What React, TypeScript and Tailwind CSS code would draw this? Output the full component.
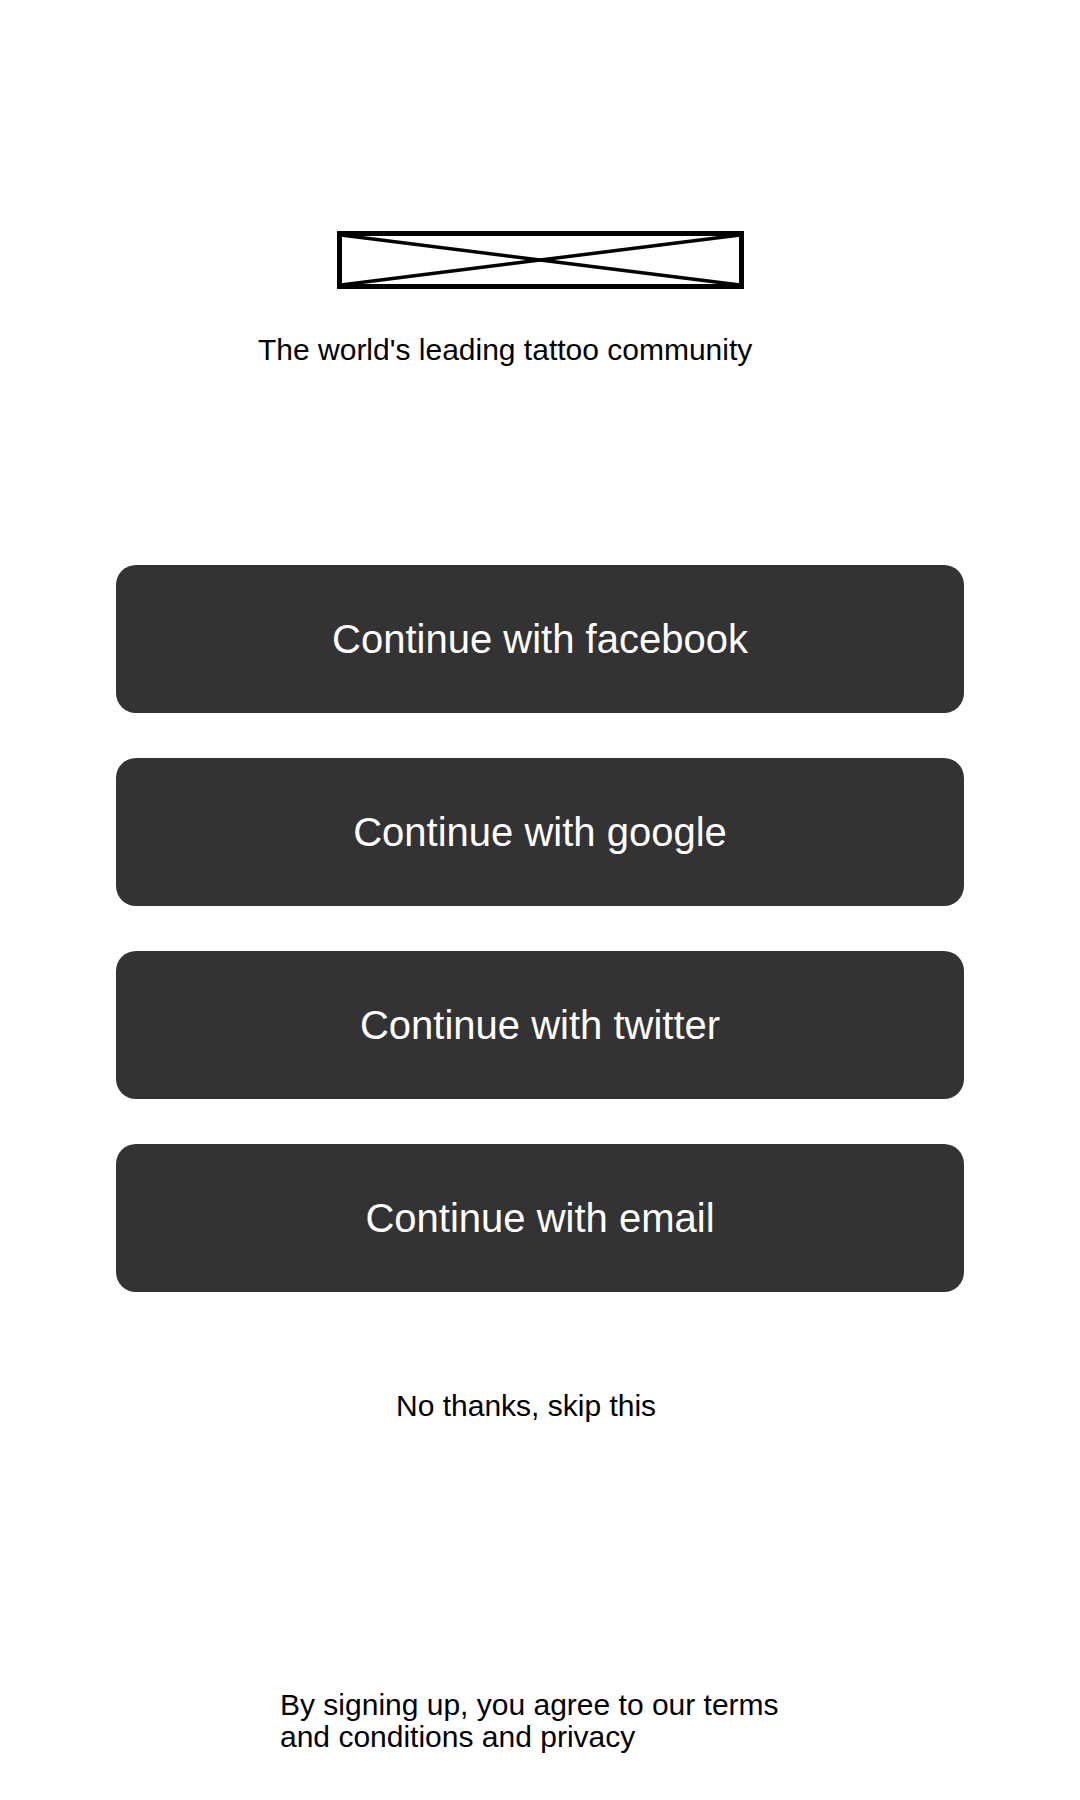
import React from 'react';

const providers = ['facebook', 'google', 'twitter', 'email'];

function LogoPlaceholder() {
    return (
        <svg width="407" height="58" viewBox="0 0 407 58" className="block">
            <line x1="4" y1="4" x2="403" y2="54" stroke="#000" strokeWidth="3.5" />
            <line x1="4" y1="54" x2="403" y2="4" stroke="#000" strokeWidth="3.5" />
            <rect x="2.5" y="2.5" width="402" height="53" fill="none" stroke="#000" strokeWidth="5" />
        </svg>
    );
}

export default function App() {
    return (
        <div
            className="min-h-[1800px] w-full bg-white text-black"
            style={{ fontFamily: '"Liberation Sans", Arial, sans-serif' }}
        >
            <div className="flex flex-col items-center pt-[231px]">
                <LogoPlaceholder />

                <div className="mt-[44px] w-[564px] text-left text-[30px] leading-[34px]">
                    The world's leading tattoo community
                </div>

                <div className="mt-[198px] flex flex-col gap-[45px]">
                    {providers.map((p) => (
                        <button
                            key={p}
                            className="flex h-[148px] w-[848px] items-center justify-center rounded-[20px] bg-[#333333] text-[40px] text-white"
                        >
                            Continue with {p}
                        </button>
                    ))}
                </div>

                <div className="mt-[97px] w-[288px] text-left text-[30px] leading-[34px]">
                    No thanks, skip this
                </div>

                <div className="mt-[266px] w-[520px] text-left text-[30px] leading-[32px]">
                    By signing up, you agree to our terms and conditions and privacy
                </div>
            </div>
        </div>
    );
}
